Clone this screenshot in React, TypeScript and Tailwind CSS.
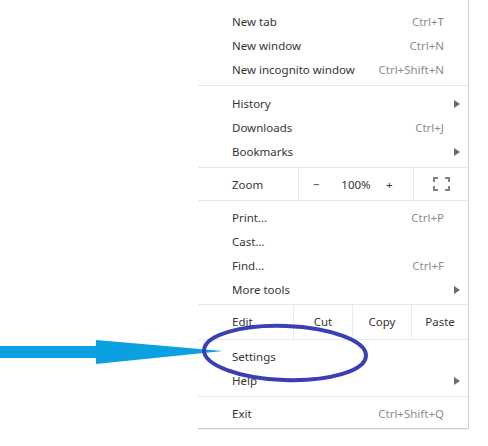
const font = { fontFamily: '"Noto Sans", "Open Sans", Arial, sans-serif' };

function Item({ label, shortcut, sub }: { label: string; shortcut?: string; sub?: boolean }) {
  return (
    <div className="flex h-6 items-center pl-[34px] pr-[7px]">
      <span className="flex-1 text-[#353535]">{label}</span>
      {shortcut && <span className="mr-[17px] text-[#8c8c8c]">{shortcut}</span>}
      {sub && (
        <svg width="6" height="8" viewBox="0 0 6 8" className="mr-[1px]">
          <path d="M0 0 L6 4 L0 8 Z" fill="#6b6b6b" />
        </svg>
      )}
    </div>
  );
}

function Sep({ after = 6 }: { after?: number }) {
  return <div className={`mt-[3px] h-px bg-[#e9e9e9] ${after === 6 ? "mb-[6px]" : "mb-[5px]"}`} />;
}

function FullscreenIcon() {
  return (
    <svg width="17" height="14" viewBox="0 0 17 14" fill="none" stroke="#808080" strokeWidth="2">
      <path d="M1 5 V1 H5" />
      <path d="M12 1 H16 V5" />
      <path d="M16 9 V13 H12" />
      <path d="M5 13 H1 V9" />
    </svg>
  );
}

export default function App() {
  return (
    <div className="relative h-[446px] w-[488px] overflow-hidden bg-white text-[11.5px]" style={font}>
      <div className="ml-[198px] w-[271px] border-r border-b border-[#cfcfcf] bg-white pt-[10px] pb-[2px] shadow-[0_1px_1px_-1px_rgba(0,0,0,0.3)]">
        <Item label="New tab" shortcut="Ctrl+T" />
        <Item label="New window" shortcut="Ctrl+N" />
        <Item label="New incognito window" shortcut="Ctrl+Shift+N" />
        <Sep />
        <Item label="History" sub />
        <Item label="Downloads" shortcut="Ctrl+J" />
        <Item label="Bookmarks" sub />
        <div className="mt-[3px] flex h-[34px] border-y border-[#e9e9e9]">
          <div className="flex w-[100px] items-center pl-[34px] pt-[2px] text-[#353535]">Zoom</div>
          <div className="flex w-[115px] items-center border-l border-[#e9e9e9] pt-[2px] text-[#353535]">
            <span className="w-[38px] pl-[14px]">−</span>
            <span className="w-[38px] text-center">100%</span>
            <span className="w-[38px] pl-[11px]">+</span>
          </div>
          <div className="flex flex-1 items-center justify-center border-l border-[#e9e9e9]">
            <FullscreenIcon />
          </div>
        </div>
        <div className="h-[5px]" />
        <Item label="Print..." shortcut="Ctrl+P" />
        <Item label="Cast..." />
        <Item label="Find..." shortcut="Ctrl+F" />
        <Item label="More tools" sub />
        <div className="mt-[2px] flex h-[36px] border-y border-[#e9e9e9] text-[#353535]">
          <div className="flex w-[95px] items-center pl-[34px]">Edit</div>
          <div className="flex w-[59px] items-center justify-center border-l border-[#e9e9e9]">Cut</div>
          <div className="flex w-[59px] items-center justify-center border-l border-[#e9e9e9]">Copy</div>
          <div className="flex flex-1 items-center justify-center border-l border-[#e9e9e9]">Paste</div>
        </div>
        <div className="h-[5px]" />
        <Item label="Settings" />
        <Item label="Help" sub />
        <Sep after={5} />
        <Item label="Exit" shortcut="Ctrl+Shift+Q" />
      </div>

      <svg className="pointer-events-none absolute inset-0" width="488" height="446" viewBox="0 0 488 446">
        <rect x="0" y="346" width="98" height="12" fill="#0ba0e0" />
        <path d="M96 340 L223 351 L96 364 Z" fill="#0ba0e0" />
        <ellipse
          cx="285"
          cy="353"
          rx="81"
          ry="27"
          fill="none"
          stroke="#3b3fb6"
          strokeWidth="4"
          transform="rotate(2 285 353)"
        />
      </svg>
    </div>
  );
}
